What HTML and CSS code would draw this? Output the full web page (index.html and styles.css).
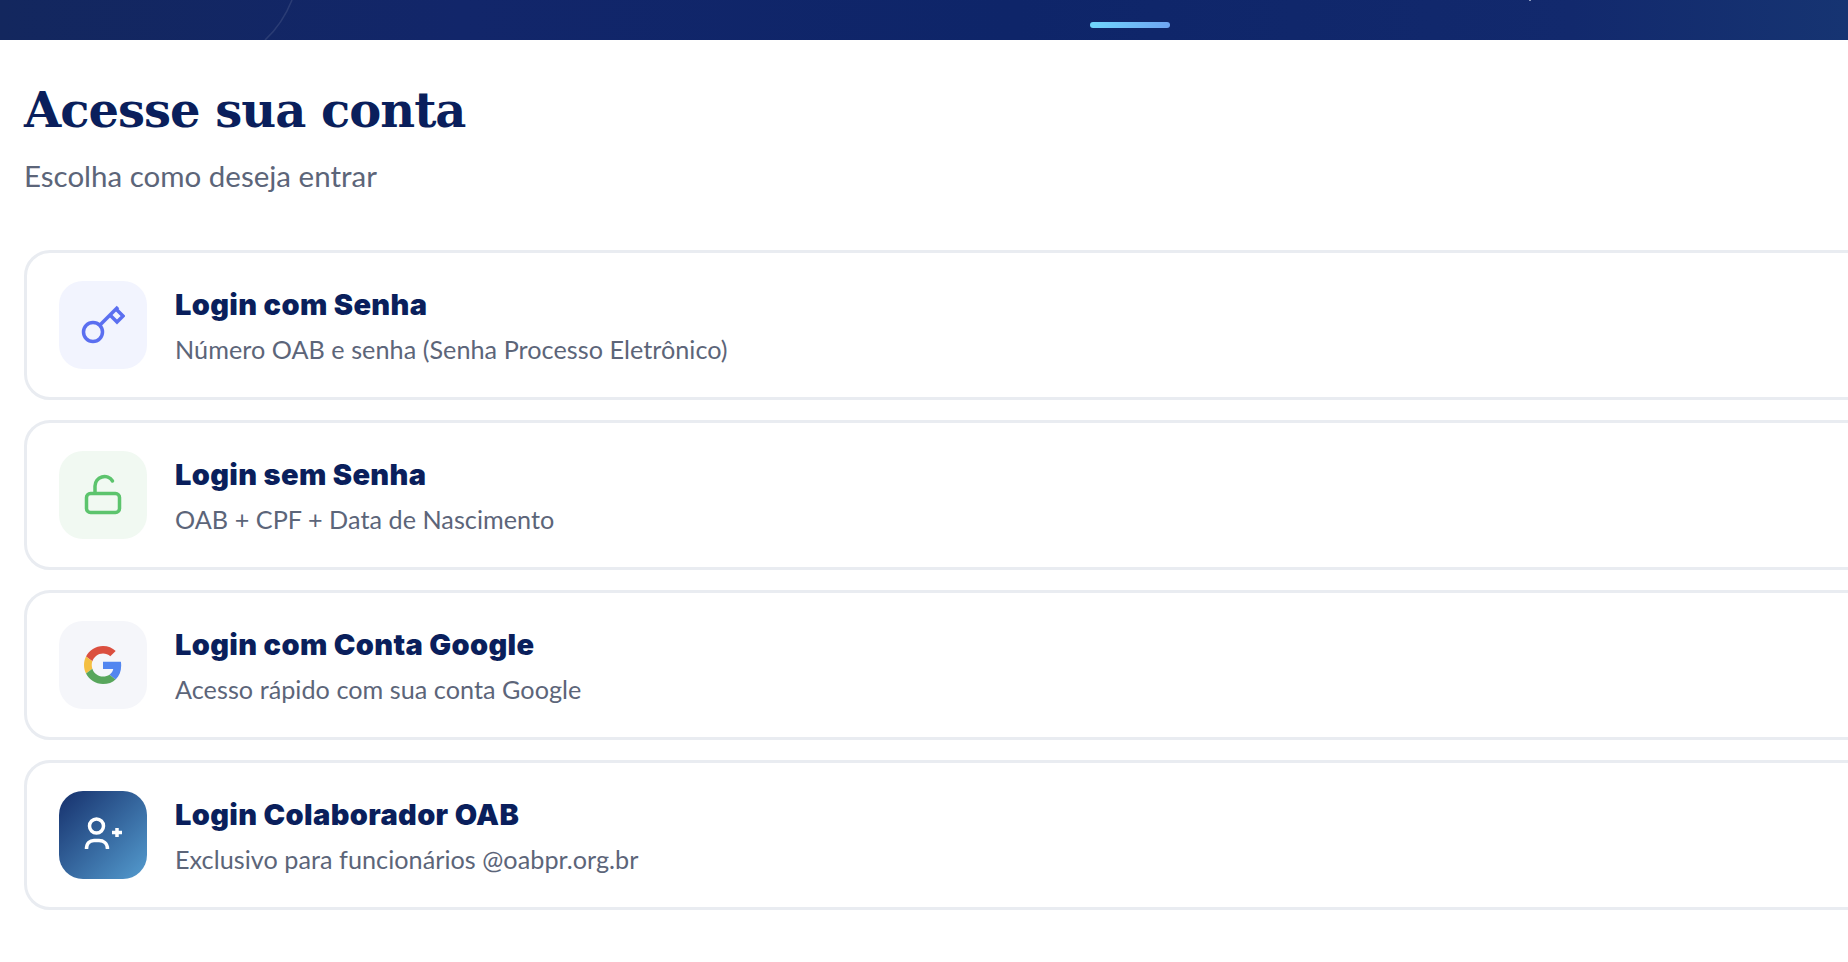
FILE: index.html
```html
<!DOCTYPE html>
<html lang="pt-br">
<head>
  <meta charset="UTF-8" />
  <meta name="viewport" content="width=device-width, initial-scale=1" />
  <title>Acesse sua conta</title>
  <link rel="stylesheet" href="styles.css">
</head>
<body>
  <header class="topo">
    <svg class="topo-arco" width="60" height="40" viewBox="0 0 60 40"><path d="M30 0 C24 15 14 30 3 40" /></svg>
    <span class="topo-ponto"></span>
    <span class="topo-barra"></span>
  </header>

  <main class="conteudo">
    <h1>Acesse sua conta</h1>
    <p class="subtitulo">Escolha como deseja entrar</p>

    <div class="opcoes">
      <a class="opcao" href="#">
        <span class="icone icone-senha">
          <svg width="44" height="44" viewBox="0 0 44 44" fill="none" stroke="currentColor" stroke-width="3.5">
            <circle cx="12" cy="29" r="9.5" />
            <path d="M18.5 22.5 L37 4" />
            <path d="M29 12 L36 19 L42 13 L35 6" />
          </svg>
        </span>
        <span class="textos">
          <strong>Login com Senha</strong>
          <small>Número OAB e senha (Senha Processo Eletrônico)</small>
        </span>
      </a>

      <a class="opcao" href="#">
        <span class="icone icone-livre">
          <svg width="44" height="44" viewBox="0 0 44 44" fill="none" stroke="currentColor" stroke-width="3.5" stroke-linecap="round">
            <rect x="5.5" y="20.5" width="33" height="19" rx="4" />
            <path d="M14 20 V13 a9.5 9.5 0 0 1 17.5 -5" />
          </svg>
        </span>
        <span class="textos">
          <strong>Login sem Senha</strong>
          <small>OAB + CPF + Data de Nascimento</small>
        </span>
      </a>

      <a class="opcao" href="#">
        <span class="icone icone-google">
          <svg width="38" height="38" viewBox="0 0 48 48">
            <path fill="#DB4F3F" d="M24 9.5c3.54 0 6.71 1.22 9.21 3.6l6.85-6.85C35.9 2.38 30.47 0 24 0 14.62 0 6.51 5.38 2.56 13.22l7.98 6.19C12.43 13.72 17.74 9.5 24 9.5z" />
            <path fill="#5286F0" d="M46.98 24.55c0-1.57-.15-3.09-.38-4.55H24v9.02h12.94c-.58 2.96-2.26 5.48-4.78 7.18l7.73 6c4.51-4.18 7.09-10.36 7.09-17.65z" />
            <path fill="#F4BF42" d="M10.53 28.59c-.48-1.45-.76-2.99-.76-4.59s.27-3.14.76-4.59l-7.98-6.19C.92 16.46 0 20.12 0 24c0 3.88.92 7.54 2.56 10.78l7.97-6.19z" />
            <path fill="#58A65C" d="M24 48c6.48 0 11.93-2.13 15.89-5.81l-7.73-6c-2.15 1.45-4.92 2.3-8.16 2.3-6.26 0-11.57-4.22-13.47-9.91l-7.98 6.19C6.51 42.62 14.62 48 24 48z" />
          </svg>
        </span>
        <span class="textos">
          <strong>Login com Conta Google</strong>
          <small>Acesso rápido com sua conta Google</small>
        </span>
      </a>

      <a class="opcao" href="#">
        <span class="icone icone-colab">
          <svg width="44" height="44" viewBox="0 0 44 44" fill="none" stroke="currentColor" stroke-width="3.5">
            <circle cx="15.5" cy="13" r="7" />
            <path d="M5.5 36 C5.5 30 9 27.5 13 27.5 H18 C22 27.5 26.5 30 26.5 36" />
            <path d="M36 15 V24 M31 19.5 H41" />
          </svg>
        </span>
        <span class="textos">
          <strong>Login Colaborador OAB</strong>
          <small>Exclusivo para funcionários @oabpr.org.br</small>
        </span>
      </a>
    </div>
  </main>
</body>
</html>
```

FILE: styles.css
```css
body {
  font-family: Lato, "Noto Sans", sans-serif;
  margin: 0;
  padding: 0;
  background-color: #fff;
  overflow: hidden;
}

.topo {
  position: relative;
  height: 40px;
  background: linear-gradient(90deg, #13275e 0%, #12266a 25%, #0e2569 55%, #12296d 85%, #163472 100%);
}

.topo-arco {
  position: absolute;
  left: 262px;
  top: 0;
  fill: none;
  stroke: rgba(255, 255, 255, 0.1);
  stroke-width: 1.5;
}

.topo-ponto {
  position: absolute;
  left: 1529px;
  top: 0;
  width: 2px;
  height: 1px;
  background-color: #8d9cc0;
}

.topo-barra {
  position: absolute;
  left: 1090px;
  top: 22px;
  width: 80px;
  height: 6px;
  border-radius: 3px;
  background: linear-gradient(90deg, #6fd6fd, #6fa5f2);
}

.conteudo {
  padding: 38px 0 0 24px;
}

h1 {
  font-family: "DejaVu Serif", serif;
  font-size: 48px;
  font-weight: bold;
  line-height: 64px;
  margin: 0;
  color: #0a1f5c;
  letter-spacing: -1px;
}

.subtitulo {
  margin: 16px 0 0;
  font-size: 29.5px;
  line-height: 36px;
  color: #5c6579;
}

.opcoes {
  display: flex;
  flex-direction: column;
  gap: 20px;
  margin-top: 56px;
  width: 1900px;
}

.opcao {
  display: flex;
  align-items: center;
  gap: 28px;
  height: 150px;
  box-sizing: border-box;
  padding: 0 32px;
  border: 3px solid #e9ecf1;
  border-radius: 26px;
  text-decoration: none;
}

.icone {
  display: flex;
  align-items: center;
  justify-content: center;
  flex: none;
  width: 88px;
  height: 88px;
  border-radius: 24px;
}

.icone-senha {
  background-color: #f2f4fe;
  color: #5b6ff0;
}

.icone-livre {
  background-color: #f1f9f2;
  color: #5cc46d;
}

.icone-google {
  background-color: #f5f6fa;
}

.icone-colab {
  background: linear-gradient(135deg, #16306c, #549ccf);
  color: #fff;
}

.textos {
  display: flex;
  flex-direction: column;
  gap: 10px;
  padding-top: 1px;
}

.textos strong {
  font-family: Inter, sans-serif;
  font-size: 29px;
  line-height: 36px;
  font-weight: 900;
  letter-spacing: 0.35px;
  color: #0a1f5c;
}

.textos small {
  font-size: 25.2px;
  line-height: 32px;
  letter-spacing: 0.04px;
  color: #5c6579;
}
```
